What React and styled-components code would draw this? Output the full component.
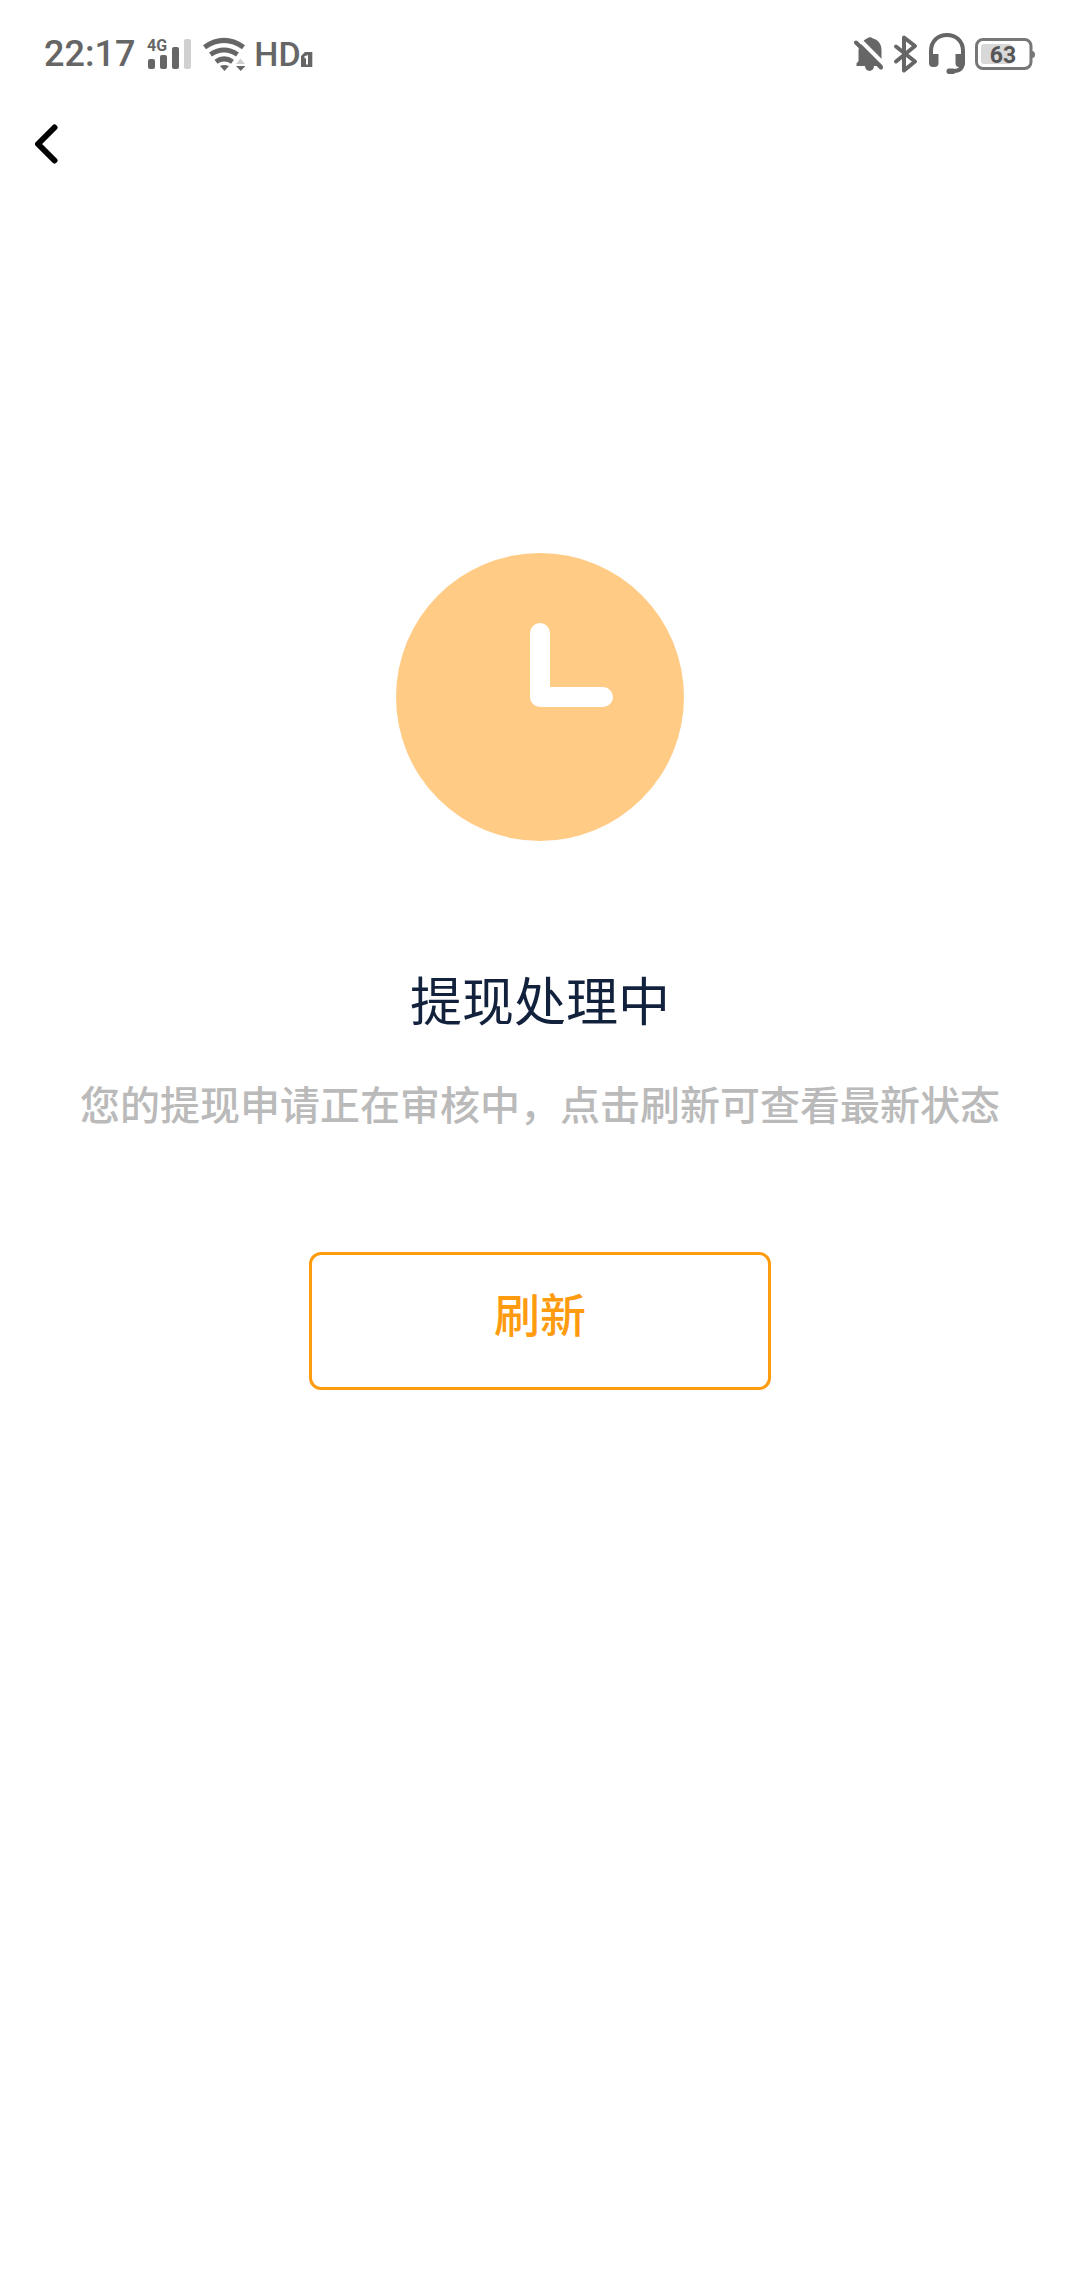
import React from 'react';
import styled, { createGlobalStyle } from 'styled-components';

const GlobalStyle = createGlobalStyle`
  *, *::before, *::after { box-sizing: border-box; }
  body {
    margin: 0;
    background: #ffffff;
    font-family: Roboto, "Noto Sans CJK SC", sans-serif;
  }
`;

const Screen = styled.div`
  min-height: 100vh;
  display: flex;
  flex-direction: column;
`;

const StatusBar = styled.header`
  display: flex;
  justify-content: space-between;
  align-items: center;
  height: 108px;
  padding: 0 44px;
  color: #666666;
`;

const StatusGroup = styled.div`
  display: flex;
  align-items: center;
  gap: ${({ $gap }) => $gap}px;
`;

const StatusText = styled.span`
  font-size: ${({ $size }) => $size}px;
  line-height: 40px;
  font-weight: 500;
`;

const Icon = styled.svg`
  display: block;
  flex: none;
`;

const NavBar = styled.nav`
  display: flex;
  align-items: center;
  height: 72px;
  padding: 0 22px;
`;

const BackButton = styled.button`
  display: flex;
  align-items: center;
  justify-content: center;
  width: 48px;
  height: 72px;
  padding: 0;
  border: 0;
  background: transparent;
  color: #000000;
  cursor: pointer;
`;

const Content = styled.main`
  display: flex;
  flex-direction: column;
  align-items: center;
  padding: 373px 24px 48px;
`;

const Title = styled.h1`
  margin: 127px 0 39px;
  font-size: 52px;
  line-height: 72px;
  font-weight: 400;
  color: #12213c;
`;

const Message = styled.p`
  margin: 0;
  font-size: 40px;
  line-height: 56px;
  font-weight: 500;
  text-align: center;
  color: #bababa;
`;

const RefreshButton = styled.button`
  width: 462px;
  max-width: 100%;
  height: 138px;
  margin-top: 117px;
  padding: 0 0 10px;
  border: 3px solid #ff9b0f;
  border-radius: 12px;
  background: transparent;
  color: #ff9b0f;
  font-family: inherit;
  font-size: 46px;
  line-height: 64px;
  font-weight: 500;
  cursor: pointer;
`;

const SignalIcon = () => (
  <Icon width="49" height="34" viewBox="145 37 49 34" fill="currentColor" aria-hidden="true">
    <text x="148" y="51" fontFamily="Roboto" fontWeight="700" fontSize="16">4G</text>
    <rect x="149" y="59" width="7" height="10" rx="2" />
    <rect x="161" y="55" width="7" height="14" rx="2" />
    <rect x="173" y="47" width="7" height="22" rx="2" />
    <rect x="185" y="39" width="7" height="30" rx="2" fill="#d0d0d0" />
  </Icon>
);

const WifiIcon = () => (
  <Icon width="43" height="34" viewBox="203 37 43 34" fill="none" aria-hidden="true">
    <g stroke="currentColor" strokeWidth="5">
      <path d="M205.500 47.200Q225 33.500 244.500 47.200" />
      <path d="M211.500 54.500Q225 45.500 238.500 54.500" />
      <path d="M217 61.800Q225 56 233.500 61.800" />
    </g>
    <path d="M221 66Q225 64 230 66L225.500 71Z" fill="currentColor" />
    <path d="M237 64l4.500-5.500 4.500 5.500z" fill="#cfcfcf" />
    <path d="M237 66h9.500l-4.750 5z" fill="currentColor" />
  </Icon>
);

const SimIcon = () => (
  <Icon width="12" height="34" viewBox="300 37 12 34" aria-hidden="true">
    <path d="M304 52h7.300v15H300V56z" fill="currentColor" />
    <path d="M303.500 57.500l2.500-1v8" fill="none" stroke="#fff" strokeWidth="2" />
  </Icon>
);

const MutedBellIcon = () => (
  <Icon width="30" height="42" viewBox="853 33 30 42" aria-hidden="true">
    <path
      d="M860 45C862 40 865 39 866 38.500Q869 36 872 38.500C878 40 880.500 45 880.500 50V62L882 66H855.500V63.500L857.500 61V50Q857.500 48 860 45Z"
      fill="currentColor"
    />
    <path d="M864 66h9a4.500 5 0 0 1-9 0z" fill="currentColor" />
    <path d="M855 36L884 65" stroke="#fff" strokeWidth="4" />
    <path d="M855 42.500L880 67.500" stroke="currentColor" strokeWidth="4" strokeLinecap="round" />
  </Icon>
);

const BluetoothIcon = () => (
  <Icon width="26" height="42" viewBox="894 33 26 42" aria-hidden="true">
    <path
      d="M897 46.500L916 61.500L905 70.500V37.500L916 46L897 61.500"
      fill="none"
      stroke="currentColor"
      strokeWidth="4"
      strokeLinecap="round"
      strokeLinejoin="round"
    />
  </Icon>
);

const HeadsetIcon = () => (
  <Icon width="38" height="42" viewBox="929 33 38 42" aria-hidden="true">
    <path
      d="M932 60V51C932 41 939 35 948 35S964 41 964 51V61C964 68 961 71 955 71H950"
      fill="none"
      stroke="currentColor"
      strokeWidth="4"
    />
    <path d="M930 54h9.500v9q0 4-4 4h-1.500q-4 0-4-4z" fill="currentColor" />
    <path d="M956.500 54h9.500v9q0 4-4 4h-2q-3.500 0-3.500-4z" fill="currentColor" />
    <rect x="947.500" y="68.500" width="9" height="5.500" rx="2.500" fill="currentColor" />
  </Icon>
);

const BatteryIcon = () => (
  <Icon width="61" height="42" viewBox="975 33 61 42" role="img" aria-label="63%">
    <rect x="976.500" y="39.500" width="54.500" height="29" rx="6.500" fill="none" stroke="#777" strokeWidth="3" />
    <path d="M1032 51q3 0 3 3.500t-3 3.500z" fill="#777" />
    <rect x="981" y="44" width="31" height="20" rx="3" fill="#d8d8d8" />
    <text x="1003" y="62.500" textAnchor="middle" fontFamily="Roboto" fontWeight="700" fontSize="23" fill="#555">63</text>
  </Icon>
);

const BackIcon = () => (
  <Icon width="24" height="40" viewBox="34 124 24 40" aria-hidden="true">
    <path
      d="M54.500 127.500L38 144L54.500 160.500"
      fill="none"
      stroke="currentColor"
      strokeWidth="6"
      strokeLinecap="round"
      strokeLinejoin="round"
    />
  </Icon>
);

const ClockIcon = () => (
  <Icon width="288" height="288" viewBox="0 0 288 288" aria-hidden="true">
    <circle cx="144" cy="144" r="144" fill="#ffcb85" />
    <path d="M144 80V144H207" fill="none" stroke="#fff" strokeWidth="20" strokeLinecap="round" strokeLinejoin="round" />
  </Icon>
);

export default function App() {
  return (
    <>
      <GlobalStyle />
      <Screen>
        <StatusBar>
          <StatusGroup $gap={9}>
            <StatusText $size={36}>22:17</StatusText>
            <SignalIcon />
            <WifiIcon />
            <StatusGroup $gap={0}>
              <StatusText $size={34}>HD</StatusText>
              <SimIcon />
            </StatusGroup>
          </StatusGroup>
          <StatusGroup $gap={9}>
            <MutedBellIcon />
            <BluetoothIcon />
            <HeadsetIcon />
            <BatteryIcon />
          </StatusGroup>
        </StatusBar>
        <NavBar>
          <BackButton type="button" aria-label="返回">
            <BackIcon />
          </BackButton>
        </NavBar>
        <Content>
          <ClockIcon />
          <Title>提现处理中</Title>
          <Message>您的提现申请正在审核中，点击刷新可查看最新状态</Message>
          <RefreshButton type="button">刷新</RefreshButton>
        </Content>
      </Screen>
    </>
  );
}
